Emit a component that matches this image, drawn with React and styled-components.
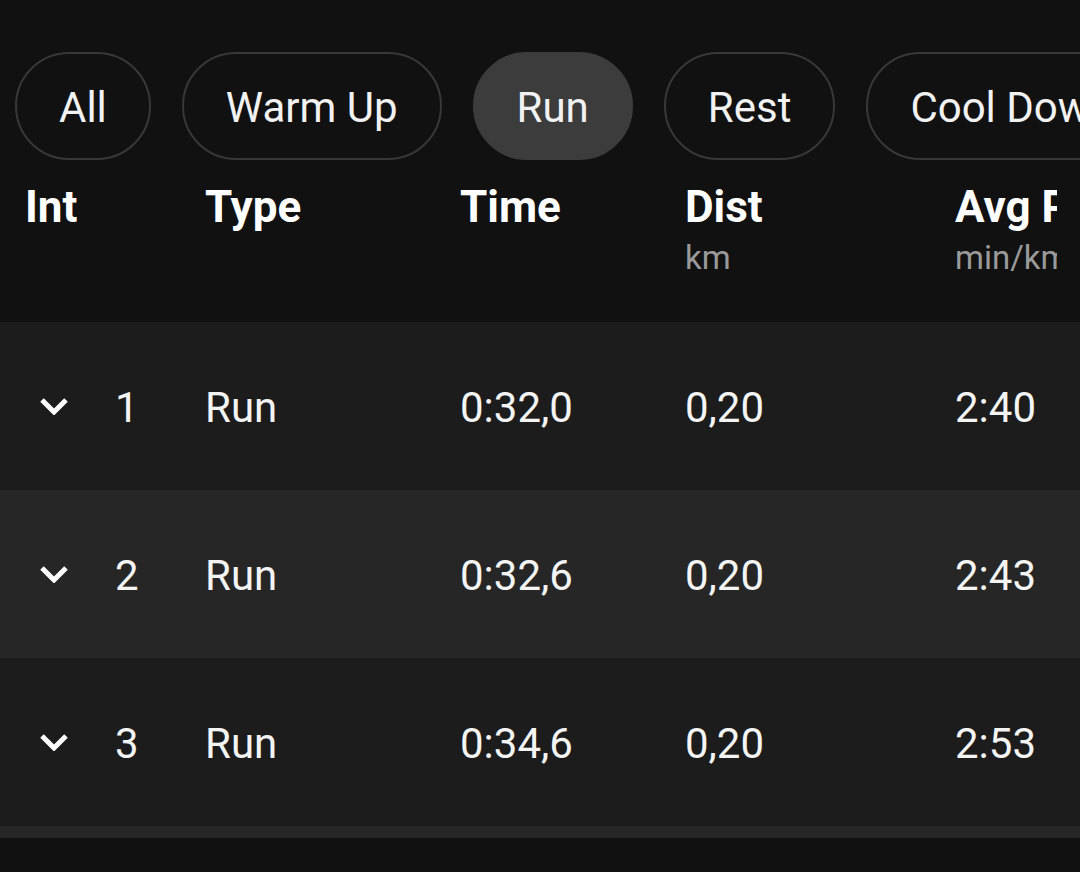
import React from "react";
import styled, { createGlobalStyle } from "styled-components";

const Global = createGlobalStyle`
  html, body { margin: 0; padding: 0; background: #111111; }
  body { font-family: Roboto, "Noto Sans", sans-serif; color: #f2f2f2; overflow: hidden; }
`;

const Screen = styled.div`
  width: 1080px;
  height: 872px;
  background: #111111;
  overflow: hidden;
`;

const FilterBar = styled.div`
  display: flex;
  gap: 31px;
  padding: 52px 0 0 15px;
  white-space: nowrap;
  overflow: hidden;
`;

const Pill = styled.button`
  flex: none;
  height: 108px;
  box-sizing: border-box;
  padding: 3px 42px 0;
  border-radius: 54px;
  border: 2px solid ${(p) => (p.$active ? "#3c3c3c" : "#383838")};
  background: ${(p) => (p.$active ? "#3c3c3c" : "transparent")};
  color: #f2f2f2;
  font-family: Roboto, sans-serif;
  font-size: 42px;
  font-weight: 400;
  line-height: 1;
`;

const Grid = styled.div`
  display: grid;
  grid-template-columns: 180px 255px 225px 270px 102px;
  align-items: ${(p) => (p.$center ? "center" : "start")};
`;

const Header = styled(Grid)`
  height: 162px;
  box-sizing: border-box;
  padding: 21px 0 0 25px;
`;

const HeadCell = styled.div`
  display: flex;
  flex-direction: column;
  gap: 5px;
  white-space: nowrap;
  overflow: hidden;
`;

const HeadTitle = styled.span`
  font-size: 44px;
  font-weight: 700;
  line-height: 52px;
  color: #ffffff;
`;

const HeadUnit = styled.span`
  font-size: 33px;
  line-height: 40px;
  color: #9a9a9a;
`;

const Row = styled(Grid)`
  height: 168px;
  box-sizing: border-box;
  padding: 3px 0 0 25px;
  background: ${(p) => (p.$alt ? "#262626" : "#1c1c1c")};
  font-size: 42px;
  color: #f4f4f4;
`;

const IntCell = styled.div`
  display: flex;
  align-items: center;
  padding-left: 14px;
  gap: 46px;
`;

const Cell = styled.div`
  white-space: nowrap;
  overflow: hidden;
`;

const Chevron = styled.svg`
  width: 30px;
  height: 18px;
  flex: none;
  margin-top: -3px;
`;

const Tail = styled.div`
  height: 12px;
  background: #262626;
`;

const filters = ["All", "Warm Up", "Run", "Rest", "Cool Down"];

const columns = [
  { title: "Int" },
  { title: "Type" },
  { title: "Time" },
  { title: "Dist", unit: "km" },
  { title: "Avg Pace", unit: "min/km" },
];

const laps = [
  { n: 1, type: "Run", time: "0:32,0", dist: "0,20", pace: "2:40" },
  { n: 2, type: "Run", time: "0:32,6", dist: "0,20", pace: "2:43" },
  { n: 3, type: "Run", time: "0:34,6", dist: "0,20", pace: "2:53" },
];

export default function App() {
  return (
    <Screen>
      <Global />
      <FilterBar>
        {filters.map((f) => (
          <Pill key={f} $active={f === "Run"}>
            {f}
          </Pill>
        ))}
      </FilterBar>
      <Header>
        {columns.map((c) => (
          <HeadCell key={c.title}>
            <HeadTitle>{c.title}</HeadTitle>
            {c.unit && <HeadUnit>{c.unit}</HeadUnit>}
          </HeadCell>
        ))}
      </Header>
      {laps.map((l, i) => (
        <Row key={l.n} $center $alt={i % 2 === 1}>
          <IntCell>
            <Chevron viewBox="0 0 30 18">
              <path d="M3 3 L15 15 L27 3" fill="none" stroke="#ffffff" strokeWidth="5" />
            </Chevron>
            <span>{l.n}</span>
          </IntCell>
          <Cell>{l.type}</Cell>
          <Cell>{l.time}</Cell>
          <Cell>{l.dist}</Cell>
          <Cell>{l.pace}</Cell>
        </Row>
      ))}
      <Tail />
    </Screen>
  );
}
